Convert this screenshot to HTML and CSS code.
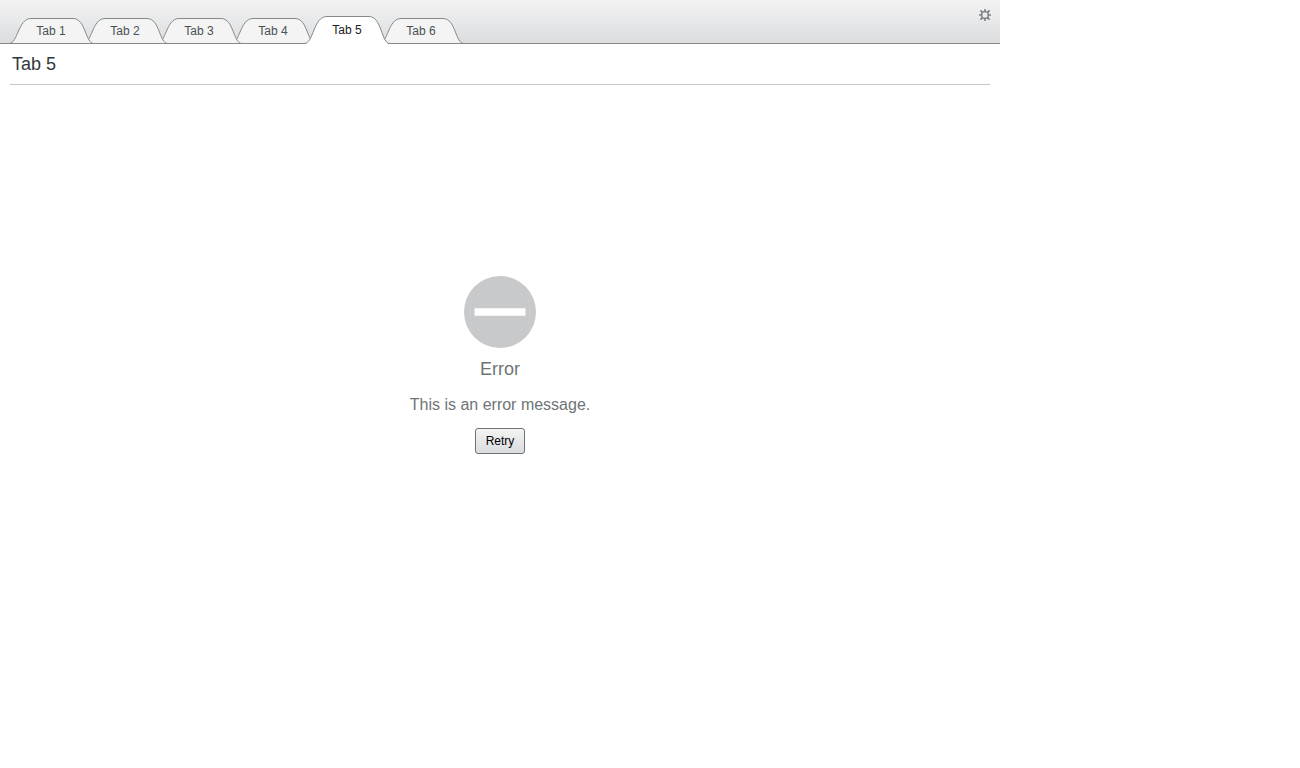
FILE: index.html
```html
<!DOCTYPE html>
<html lang="en">
<head>
<meta charset="utf-8">
<title>Tab 5</title>
<link rel="stylesheet" href="styles.css">
</head>
<body>
<svg class="sprites" aria-hidden="true">
  <symbol id="tab" viewBox="0 0 86 28">
    <path d="M1 27.5C10 27.5 10 2.5 23 2.5H65C78 2.5 77 27.5 86 27.5Z"/>
  </symbol>
  <symbol id="tab-active" viewBox="0 0 86 28">
    <path class="cover" d="M0 28C10 28 9 .5 23 .5H65C78 .5 77 28 86 28Z"/>
    <path class="edge" d="M0 27.5C10 27.5 9 .5 23 .5H65C78 .5 77 27.5 86 27.5"/>
  </symbol>
</svg>
<div class="app">
  <header class="bar">
    <nav class="tabs" role="tablist" aria-label="Tabs">
      <button class="tab" role="tab"><svg class="shape"><use href="#tab"/></svg><span class="label">Tab 1</span></button>
      <button class="tab" role="tab"><svg class="shape"><use href="#tab"/></svg><span class="label">Tab 2</span></button>
      <button class="tab" role="tab"><svg class="shape"><use href="#tab"/></svg><span class="label">Tab 3</span></button>
      <button class="tab" role="tab"><svg class="shape"><use href="#tab"/></svg><span class="label">Tab 4</span></button>
      <button class="tab active" role="tab" aria-selected="true"><svg class="shape"><use href="#tab-active"/></svg><span class="label">Tab 5</span></button>
      <button class="tab" role="tab"><svg class="shape"><use href="#tab"/></svg><span class="label">Tab 6</span></button>
    </nav>
    <button class="settings" aria-label="Settings">
      <svg class="gear" viewBox="0 0 12 12">
        <rect x="2.8" y="2.8" width="6.4" height="6.4" rx="2" fill="none" stroke="#7e8486" stroke-width="1.6"/>
        <path d="M6 0V2.4M6 9.6V12M0 6H2.4M9.6 6H12M1.4 1.4L3.2 3.2M8.8 8.8L10.6 10.6M10.6 1.4L8.8 3.2M3.2 8.8L1.4 10.6" stroke="#7e8486" stroke-width="1.7"/>
      </svg>
    </button>
  </header>
  <main class="panel">
    <h1 class="title">Tab 5</h1>
    <section class="error">
      <svg class="error-icon" viewBox="0 0 72 72" aria-hidden="true">
        <circle cx="36" cy="36" r="36" fill="#c8c9cb"/>
        <path d="M10.5 32.3H61.5V39.7H10.5Z" fill="#fff"/>
      </svg>
      <h2 class="error-title">Error</h2>
      <p class="error-text">This is an error message.</p>
      <button class="retry">Retry</button>
    </section>
  </main>
</div>
</body>
</html>
```

FILE: styles.css
```css
* {
  box-sizing: border-box;
}

body {
  margin: 0;
  background: #fff;
  font-family: "Liberation Sans", Arial, sans-serif;
  font-size: 12px;
}

button {
  font: inherit;
  padding: 0;
  border: 0;
  background: none;
}

.sprites {
  display: none;
}

.app {
  max-width: 1000px;
}

.bar {
  display: flex;
  justify-content: space-between;
  align-items: flex-start;
  height: 44px;
  padding: 0 9px 0 8px;
  background: linear-gradient(#f3f3f3, #dadcde);
  box-shadow: inset 0 -1px #85898b;
}

.tabs {
  display: flex;
  align-self: flex-end;
  isolation: isolate;
}

.tab {
  display: grid;
  width: 86px;
  height: 28px;
  margin-right: -12px;
  position: relative;
  color: #4a5153;
}

.tab:nth-child(1) { z-index: 6; }
.tab:nth-child(2) { z-index: 5; }
.tab:nth-child(3) { z-index: 4; }
.tab:nth-child(4) { z-index: 3; }
.tab:nth-child(6) { z-index: 1; }

.tab.active {
  z-index: 7;
  color: #1c2022;
}

.shape,
.label {
  grid-area: 1 / 1;
}

.shape {
  width: 86px;
  height: 28px;
  fill: #f4f4f4;
  stroke: #85898b;
}

.cover {
  fill: #fff;
  stroke: none;
}

.edge {
  fill: none;
}

.label {
  padding-top: 1px;
  line-height: 28px;
  text-align: center;
}

.active .label {
  padding-top: 0;
}

.settings {
  display: flex;
  padding-top: 9px;
}

.gear {
  width: 12px;
  height: 12px;
}

.panel {
  padding: 0 10px;
}

.title {
  margin: 0;
  padding: 0 2px;
  border-bottom: 1px solid #c5c7c8;
  color: #32383a;
  font-size: 18px;
  font-weight: normal;
  line-height: 40px;
}

.error {
  display: flex;
  flex-direction: column;
  align-items: center;
  justify-content: center;
  min-height: 560px;
  color: #6e7476;
}

.error-icon {
  width: 72px;
  height: 72px;
}

.error-title {
  margin: 10px 0 0;
  font-size: 18px;
  font-weight: normal;
  line-height: 22px;
}

.error-text {
  margin: 15px 0 14px;
  font-size: 16px;
  line-height: 19px;
}

.retry {
  height: 26px;
  padding: 0 10px;
  border: 1px solid #6e7376;
  border-radius: 3px;
  background: linear-gradient(#f3f3f3, #dadcde);
  color: #000;
}
```
